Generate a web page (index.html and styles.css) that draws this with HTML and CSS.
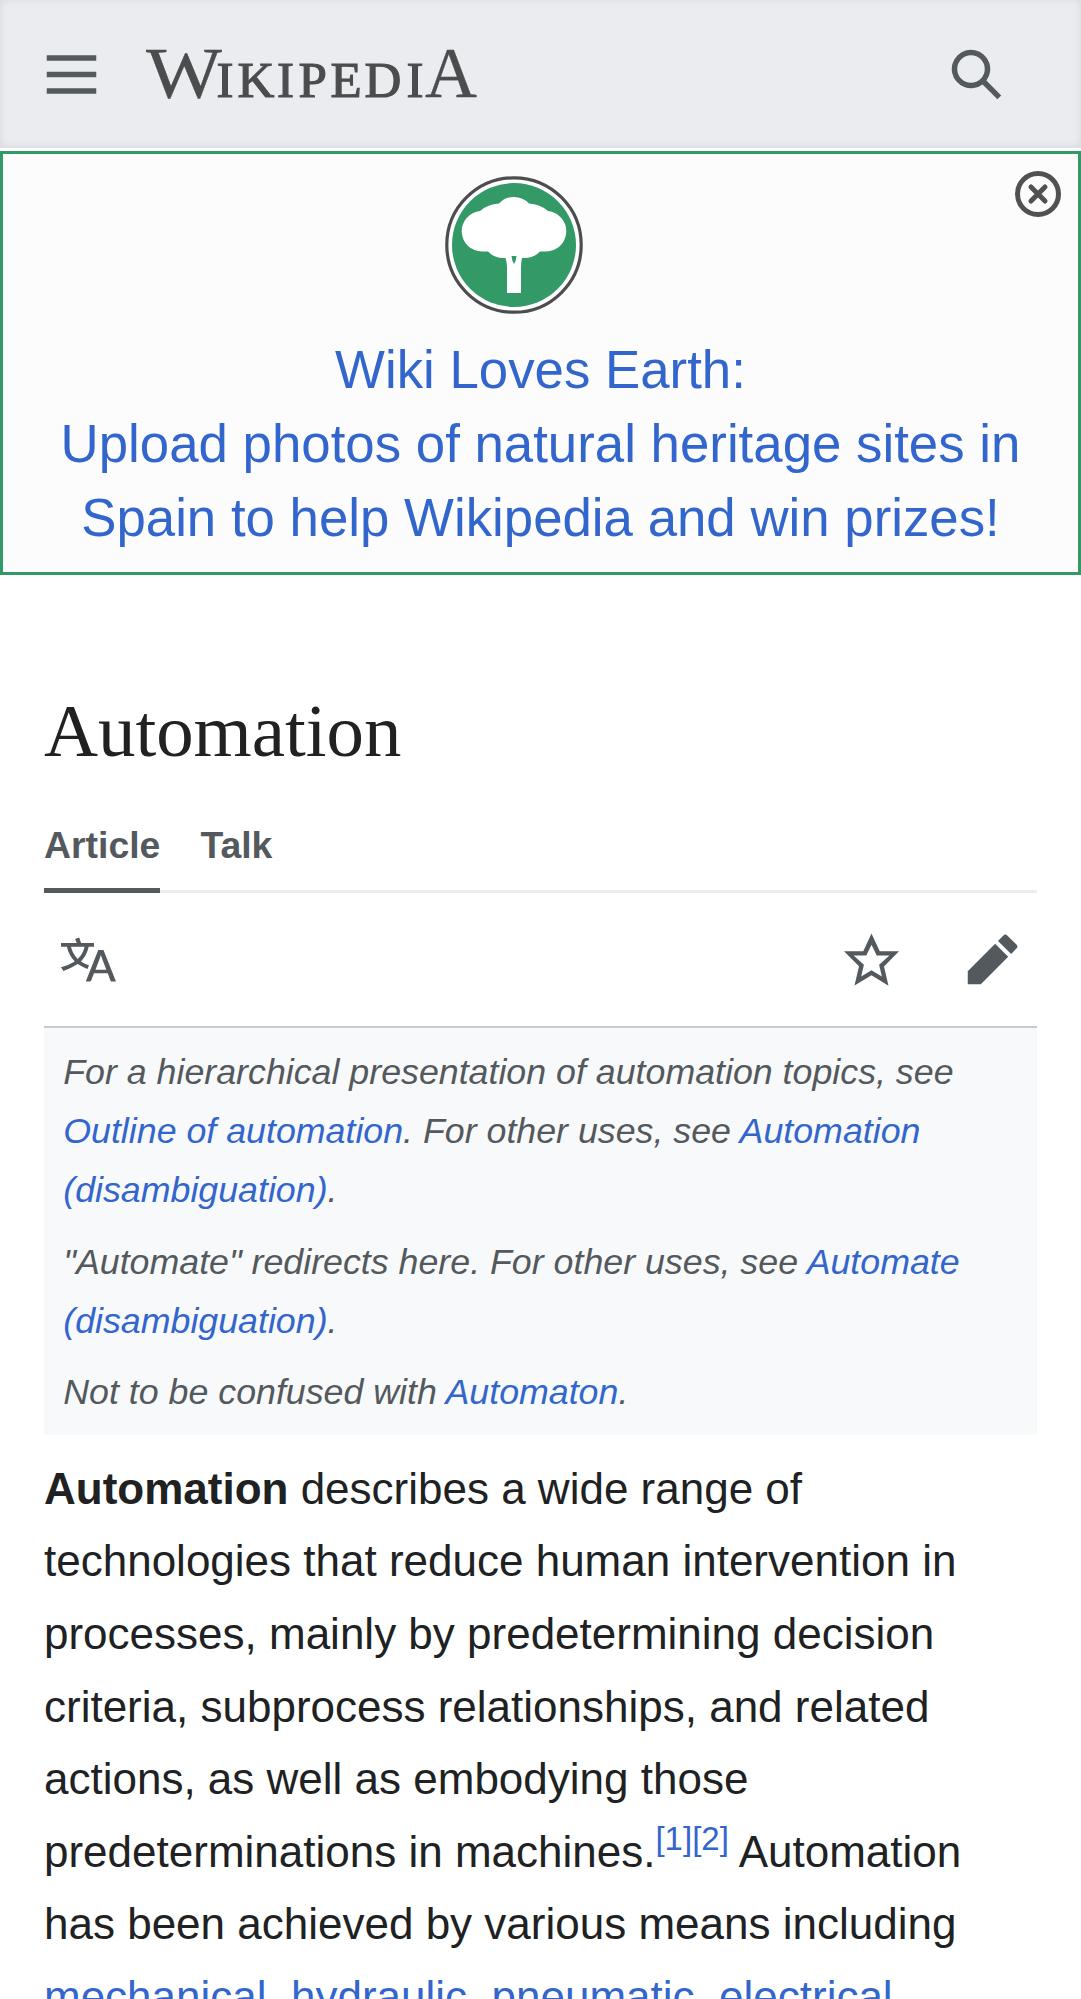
FILE: index.html
```html
<!DOCTYPE html>
<html lang="en">
<head>
<meta charset="utf-8">
<title>Automation - Wikipedia</title>
<link rel="stylesheet" href="styles.css">
</head>
<body>
<header class="header">
  <svg class="icon" viewBox="0 0 20 20"><path d="M1 3v2h18V3zm0 8h18V9H1zm0 6h18v-2H1z"/></svg>
  <svg class="wordmark" viewBox="0 0 334 96" role="img" aria-label="Wikipedia">
    <text class="wordmark-cap" x="0" y="71" textLength="76" lengthAdjust="spacingAndGlyphs">W</text>
    <text class="wordmark-small" x="70.5 91.500 131 152.500 184.500 218.500 260.500" y="71">IKIPEDI</text>
    <text class="wordmark-cap" x="279" y="71" textLength="52" lengthAdjust="spacingAndGlyphs">A</text>
  </svg>
  <svg class="icon search" viewBox="0 0 20 20"><path d="M12.2 13.6a7 7 0 1 1 1.4-1.4l5.4 5.4-1.4 1.4zM13 8A5 5 0 1 0 3 8a5 5 0 0 0 10 0"/></svg>
</header>

<section class="banner">
  <svg class="emblem" viewBox="0 0 138 138">
    <circle cx="69" cy="69" r="67.2" fill="#fff" stroke="#4d4d4f" stroke-width="3.2"/>
    <circle cx="69" cy="69" r="62" fill="#339966"/>
    <path fill="#fff" d="M37 75.500A20.300 20.300 0 0 1 35 35Q43 28 54 27.500Q60 21 69 21Q78 21 84 27.500Q95 28 103 35A20.300 20.300 0 0 1 101 75.500H95Q88 83 77 82Q76 86 76 91V117H62V91Q62 86 60.500 82Q50 83 43 75.500z"/>
    <path d="M66.500 80h5q-.5 5-2.500 8-2-3-2.500-8z" fill="#339966"/>
  </svg>
  <a class="banner-text">Wiki Loves Earth:<br>Upload photos of natural heritage sites in Spain to help Wikipedia and win prizes!</a>
  <svg class="close" viewBox="0 0 48 48"><circle cx="24" cy="24" r="20.500"/><path d="M17 17l14 14M31 17L17 31"/></svg>
</section>

<main class="page">
  <h1 class="title">Automation</h1>
  <nav class="tabs">
    <a class="tab tab-active">Article</a>
    <a class="tab">Talk</a>
  </nav>
  <div class="toolbar">
    <svg class="icon" viewBox="0 0 20 20"><path d="M20 18h-1.440a.6.6 0 0 1-.4-.12.8.8 0 0 1-.23-.31L17 15h-5l-1 2.540a.8.8 0 0 1-.22.3.6.6 0 0 1-.4.14H9l4.550-11.470h1.890zm-3.530-4.310L14.890 9.500a12 12 0 0 1-.39-1.240q-.09.37-.19.69l-.19.56-1.580 4.190zm-6.300-1.580a13.400 13.400 0 0 1-2.910-1.410 11.460 11.460 0 0 0 2.810-5.370H12V4H7.310a4 4 0 0 0-.2-.56C6.870 2.790 6.600 2 6.600 2l-1.470.5s.4.89.6 1.500H0v1.330h2.150A11.230 11.230 0 0 0 5 10.700a17.200 17.200 0 0 1-5 2.100q.56.82.87 1.380a23.300 23.300 0 0 0 5.220-2.510 15.600 15.600 0 0 0 3.560 1.770zM3.630 5.330h4.910a8.100 8.100 0 0 1-2.450 4.450 9.100 9.100 0 0 1-2.460-4.450"/></svg>
    <svg class="icon star" viewBox="0 0 20 20"><path d="M20 7h-7L10 .5 7 7H0l5.460 5.470-1.640 7 6.180-3.700 6.180 3.730-1.630-7zm-10 6.900-3.760 2.270 1-4.280L3.500 8.500h4.610L10 4.600l1.900 3.900h4.600l-3.730 3.400 1 4.280z"/></svg>
    <svg class="icon" viewBox="0 0 20 20"><path d="m16.770 8 1.940-2a1 1 0 0 0 0-1.410l-3.340-3.300a1 1 0 0 0-1.410 0L12 3.230zM1 14.250V19h4.750l9.960-9.960-4.750-4.750z"/></svg>
  </div>
  <div class="hatnotes">
    <div>For a hierarchical presentation of automation topics, see <a>Outline of automation</a>. For other uses, see <a>Automation (disambiguation)</a>.</div>
    <div>"Automate" redirects here. For other uses, see <a>Automate (disambiguation)</a>.</div>
    <div>Not to be confused with <a>Automaton</a>.</div>
  </div>
  <p class="lead"><b>Automation</b> describes a wide range of technologies that reduce human intervention in processes, mainly by predetermining decision criteria, subprocess relationships, and related actions, as well as embodying those predeterminations in machines.<sup><a>[1]</a><a>[2]</a></sup> Automation has been achieved by various means including <a>mechanical</a>, <a>hydraulic</a>, <a>pneumatic</a>, <a>electrical</a>,</p>
</main>
</body>
</html>
```
FILE: styles.css
```css
* { box-sizing: border-box; }
body {
  margin: 0;
  height: 1999px;
  overflow: hidden;
  background: #fff;
  color: #202122;
  font-family: "Liberation Sans", Arial, sans-serif;
  font-size: 44px;
}
a { color: #3366cc; text-decoration: none; }
.icon { display: block; flex: none; width: 55px; height: 55px; fill: #54595d; }

.header {
  display: flex;
  align-items: center;
  height: 148px;
  padding: 0 77px 0 44px;
  background: #eaecf0;
  box-shadow: inset 0 -1px 9px rgba(0, 0, 0, 0.09);
}
.wordmark { width: 334px; height: 96px; margin-left: 47px; overflow: visible; fill: #4b4c4e; stroke: #4b4c4e; font-family: "Liberation Serif", serif; }
.wordmark-cap { font-size: 72px; stroke-width: 0.3; }
.wordmark-small { font-size: 51px; stroke-width: 1.2; }
.search { margin-left: auto; }

.banner {
  position: relative;
  display: flex;
  flex-direction: column;
  align-items: center;
  height: 424px;
  margin-top: 3px;
  padding: 22px 45px 0;
  border: 3px solid #339966;
  background: #fcfcfc;
}
.emblem { flex: none; width: 138px; height: 138px; margin-right: 53px; }
.banner-text { margin-top: 19px; font-size: 52.8px; line-height: 74px; text-align: center; }
.close { position: absolute; top: 16px; right: 16px; width: 48px; height: 48px; fill: none; stroke: #505153; stroke-width: 5; stroke-linecap: round; }

.page { padding: 107px 44px 0; }
.title { margin: 0; font: 400 74.8px/97.2px "Liberation Serif", serif; }
.tabs { display: flex; gap: 40px; height: 79px; margin-top: 35px; border-bottom: 3px solid #eaecf0; }
.tab { height: 79px; color: #54595d; font-size: 37.4px; font-weight: 700; line-height: 62px; }
.tab-active { border-bottom: 5.5px solid #54595d; }
.toolbar { display: flex; align-items: center; height: 135px; padding: 0 17px; border-bottom: 2.750px solid #c8ccd1; }
.star { margin-left: auto; margin-right: 66px; }
.hatnotes {
  display: flex;
  flex-direction: column;
  gap: 12.4px;
  height: 407px;
  padding: 15px 19.250px 0;
  background: #f8f9fa;
  color: #54595d;
  font-size: 35.750px;
  font-style: italic;
  line-height: 58.99px;
}
.lead { margin: 17.7px 0 0; line-height: 72.600px; }
.lead sup { position: relative; top: -17px; font-size: 33px; line-height: 0; vertical-align: baseline; }
```
